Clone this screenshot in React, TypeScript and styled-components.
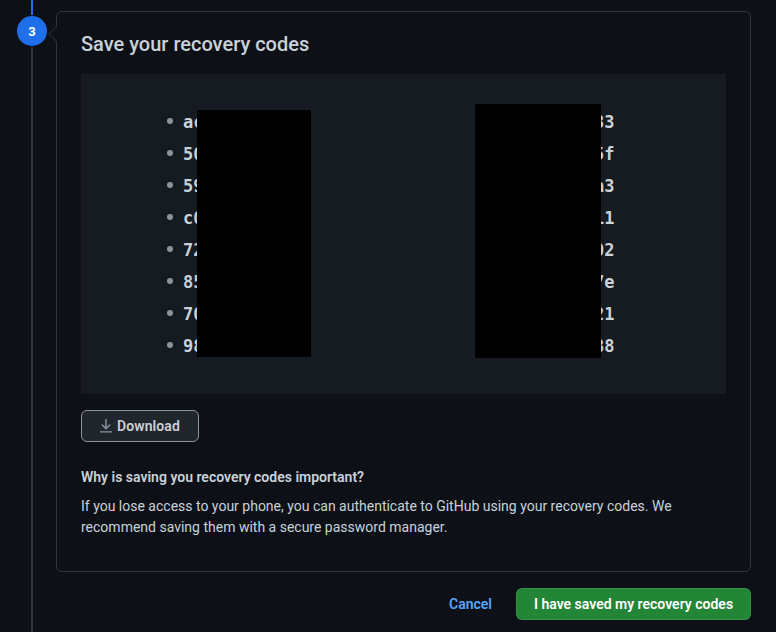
import React from 'react';
import styled, { createGlobalStyle } from 'styled-components';

const GlobalStyle = createGlobalStyle`
    html, body {
        margin: 0;
        background: #0d1117;
    }
    body {
        font-family: Roboto, "Noto Sans", "Liberation Sans", sans-serif;
        font-size: 14px;
        color: #c9d1d9;
    }
`;

// the middle of every code is covered in the screenshot
const leftCodes = ['ac000-00000', '50000-00000', '59000-00000', 'c0000-00000', '72000-00000', '85000-00000', '70000-00000', '98000-00000'];
const rightCodes = ['00000-00033', '00000-0005f', '00000-000a3', '00000-00011', '00000-00002', '00000-0007e', '00000-00021', '00000-00088'];

const DownloadIcon = () => (
    <svg width="16" height="16" viewBox="0 0 16 16" fill="currentColor">
        <path d="M2 13.25h12v1.25H2z" />
        <path d="M7.25 1.75v7.19L4.78 6.47a.75.75 0 0 0-1.06 1.06l3.75 3.75a.75.75 0 0 0 1.06 0l3.75-3.75a.75.75 0 0 0-1.06-1.06L8.75 8.94V1.75a.75.75 0 0 0-1.5 0z" />
    </svg>
);

const App = () => {
    return (
        <>
            <GlobalStyle />
            <Page>
                <Rail>
                    <RailLine $active />
                    <StepBadge>3</StepBadge>
                    <RailLine />
                </Rail>
                <Main>
                    <Card>
                        <CardTitle>Save your recovery codes</CardTitle>
                        <CodesBox>
                            <CodeList>
                                {leftCodes.map((code) => <li key={code}>{code}</li>)}
                            </CodeList>
                            <CodeList>
                                {rightCodes.map((code) => <li key={code}>{code}</li>)}
                            </CodeList>
                            <Redaction $left={116} $top={36} $width={114} $height={247} />
                            <Redaction $left={394} $top={30} $width={126} $height={254} />
                        </CodesBox>
                        <DownloadButton type="button">
                            <DownloadIcon />
                            Download
                        </DownloadButton>
                        <InfoTitle>Why is saving you recovery codes important?</InfoTitle>
                        <InfoText>
                            If you lose access to your phone, you can authenticate to GitHub using your recovery codes. We
                            recommend saving them with a secure password manager.
                        </InfoText>
                    </Card>
                    <Footer>
                        <CancelLink href="#">Cancel</CancelLink>
                        <SavedButton type="button">I have saved my recovery codes</SavedButton>
                    </Footer>
                </Main>
            </Page>
        </>
    );
};

export default App;

const Page = styled.div`
    display: flex;
    height: 632px;
    overflow: hidden;
    padding: 0 25px 0 17px;
    box-sizing: border-box;
    background: #0d1117;
`;
const Rail = styled.div`
    display: flex;
    flex-direction: column;
    align-items: center;
    flex: 0 0 30px;
    margin-right: 9px;
`;
const RailLine = styled.div<{ $active?: boolean }>`
    width: 2px;
    background: ${(p) => (p.$active ? '#1f6feb' : '#30363d')};
    flex: ${(p) => (p.$active ? '0 0 15px' : '1')};
`;
const StepBadge = styled.div`
    width: 30px;
    height: 30px;
    margin: 1px 0;
    border-radius: 50%;
    background: #1f6feb;
    color: #fff;
    font-size: 13px;
    font-weight: 700;
    display: flex;
    align-items: center;
    justify-content: center;
`;
const Main = styled.div`
    flex: 1;
    padding-top: 11px;
    min-width: 0;
`;
const Card = styled.section`
    position: relative;
    height: 561px;
    box-sizing: border-box;
    padding: 17px 24px 0;
    border: 1px solid #30363d;
    border-radius: 6px;
    background: #0d1117;

    &::before {
        content: '';
        position: absolute;
        left: -8px;
        top: 15px;
        width: 13px;
        height: 13px;
        background: #0d1117;
        border-left: 1px solid #30363d;
        border-bottom: 1px solid #30363d;
        transform: rotate(45deg) scale(0.75);
    }
`;
const CardTitle = styled.h2`
    margin: 0 0 15px;
    font-size: 20px;
    line-height: 30px;
    font-weight: 500;
    color: #c9d1d9;
`;
const CodesBox = styled.div`
    position: relative;
    height: 320px;
    box-sizing: border-box;
    padding: 32px 0 0 102px;
    display: grid;
    grid-template-columns: 319px 1fr;
    background: #161b22;
`;
const CodeList = styled.ul`
    margin: 0;
    padding: 0;
    list-style: none;

    li {
        position: relative;
        height: 32px;
        line-height: 32px;
        font-family: "DejaVu Sans Mono", "Liberation Mono", monospace;
        font-size: 17px;
        font-weight: 700;
        color: #c9d1d9;
        white-space: nowrap;
    }
    li::before {
        content: '';
        position: absolute;
        left: -16px;
        top: 12px;
        width: 6px;
        height: 6px;
        border-radius: 50%;
        background: #8b949e;
    }
`;
const Redaction = styled.div<{ $left: number; $top: number; $width: number; $height: number }>`
    position: absolute;
    left: ${(p) => p.$left}px;
    top: ${(p) => p.$top}px;
    width: ${(p) => p.$width}px;
    height: ${(p) => p.$height}px;
    background: #000;
`;
const DownloadButton = styled.button`
    display: flex;
    align-items: center;
    justify-content: center;
    gap: 3px;
    width: 118px;
    height: 32px;
    margin-top: 16px;
    padding: 0 2px 0 0;
    border: 1px solid #8b949e;
    border-radius: 6px;
    background: #21262d;
    color: #c9d1d9;
    font-family: inherit;
    font-size: 14px;
    font-weight: 600;
    letter-spacing: 0.1px;

    svg {
        color: #8b949e;
    }
`;
const InfoTitle = styled.h3`
    margin: 25px 0 0;
    font-size: 14px;
    line-height: 21px;
    font-weight: 600;
    color: #c9d1d9;
`;
const InfoText = styled.p`
    margin: 8px 0 0;
    font-size: 14px;
    line-height: 21px;
    color: #c9d1d9;
`;
const Footer = styled.div`
    display: flex;
    justify-content: flex-end;
    align-items: center;
    gap: 24px;
    margin-top: 16px;
`;
const CancelLink = styled.a`
    color: #58a6ff;
    font-size: 14px;
    font-weight: 600;
    text-decoration: none;
`;
const SavedButton = styled.button`
    height: 32px;
    width: 235px;
    padding: 0;
    border: 1px solid rgba(240, 246, 252, 0.1);
    border-radius: 6px;
    background: #238636;
    color: #fff;
    font-family: inherit;
    font-size: 14px;
    font-weight: 600;
`;
